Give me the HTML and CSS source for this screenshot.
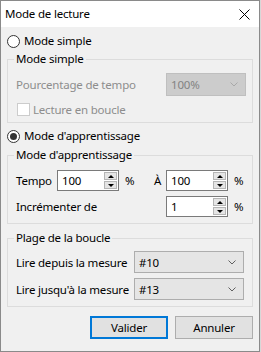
FILE: index.html
```html
<!DOCTYPE html>
<html lang="fr">
<head>
<meta charset="utf-8">
<title>Mode de lecture</title>
<link rel="stylesheet" href="styles.css">
</head>
<body>
<div class="dialog">
  <div class="titlebar">
    <span class="title">Mode de lecture</span>
    <svg class="close" width="11" height="11" viewBox="0 0 11 11"><path d="M0.5 0.5 L10.5 10.5 M10.5 0.5 L0.5 10.5" stroke="#000" stroke-width="1" fill="none"/></svg>
  </div>
  <div class="content">
    <div class="radio-row first"><span class="radio"></span><span>Mode simple</span></div>
    <fieldset class="group g1">
      <legend>Mode simple</legend>
      <div class="row-between">
        <span class="disabled-text">Pourcentage de tempo</span>
        <div class="combo combo-disabled small"><span>100%</span><svg class="chev" width="8" height="5" viewBox="0 0 8 5"><path d="M0.5 0.5 L4 4 L7.5 0.5" stroke="#a8a8a8" fill="none"/></svg></div>
      </div>
      <div class="check-row"><span class="checkbox"></span><span class="disabled-text">Lecture en boucle</span></div>
    </fieldset>
    <div class="radio-row second"><span class="radio checked"></span><span>Mode d'apprentissage</span></div>
    <fieldset class="group g2">
      <legend>Mode d'apprentissage</legend>
      <div class="learn-grid">
        <span>Tempo</span>
        <div class="spin"><span class="spin-val">100</span><div class="spin-btns"><span class="sb up"></span><span class="sb down"></span></div></div>
        <span class="pct">%</span>
        <span>À</span>
        <div class="spin"><span class="spin-val">100</span><div class="spin-btns"><span class="sb up"></span><span class="sb down"></span></div></div>
        <span class="pct">%</span>
        <span class="span4">Incrémenter de</span>
        <div class="spin"><span class="spin-val">1</span><div class="spin-btns"><span class="sb up"></span><span class="sb down"></span></div></div>
        <span class="pct">%</span>
      </div>
    </fieldset>
    <fieldset class="group g3">
      <legend>Plage de la boucle</legend>
      <div class="range-grid">
        <span>Lire depuis la mesure</span>
        <div class="combo"><span>#10</span><svg class="chev" width="8" height="5" viewBox="0 0 8 5"><path d="M0.5 0.5 L4 4 L7.5 0.5" stroke="#606060" fill="none"/></svg></div>
        <span>Lire jusqu'à la mesure</span>
        <div class="combo"><span>#13</span><svg class="chev" width="8" height="5" viewBox="0 0 8 5"><path d="M0.5 0.5 L4 4 L7.5 0.5" stroke="#606060" fill="none"/></svg></div>
      </div>
    </fieldset>
    <div class="buttons">
      <button class="btn default">Valider</button>
      <button class="btn">Annuler</button>
    </div>
  </div>
</div>
</body>
</html>
```
FILE: styles.css
```css
* { box-sizing: border-box; }
html, body { margin: 0; padding: 0; }
body {
  background: #d8d8d8;
  font-family: "Noto Sans", "Open Sans", sans-serif;
  font-size: 11.5px;
  letter-spacing: -0.2px;
  color: #000;
  width: 261px;
  height: 352px;
  overflow: hidden;
  white-space: nowrap;
}
.dialog {
  width: 260px;
  height: 352px;
  border: 1px solid #8a8a8a;
  background: #f0f0f0;
  display: flex;
  flex-direction: column;
}
.titlebar {
  height: 26px;
  background: #fff;
  display: flex;
  align-items: center;
  justify-content: space-between;
  padding: 0 9px 0 4px;
  flex: none;
}
.title { line-height: 16px; }
.close { display: block; }
.content {
  padding: 0 6px 0 6px;
  display: flex;
  flex-direction: column;
}
.radio-row {
  display: flex;
  align-items: center;
  gap: 4px;
  height: 16px;
  line-height: 16px;
}
.radio-row.first { margin-top: 6px; }
.radio-row.second { margin-top: 5px; }
.radio {
  width: 13px;
  height: 13px;
  border: 1px solid #333;
  border-radius: 50%;
  background: #fff;
  display: flex;
  align-items: center;
  justify-content: center;
  flex: none;
}
.radio.checked::after {
  content: "";
  width: 7px;
  height: 7px;
  border-radius: 50%;
  background: #333;
}
.group {
  border: 1px solid #dcdcdc;
  margin: 2px 0 0 0;
  padding: 0 6px 5px 8px;
  min-width: 0;
}
.group legend {
  padding: 0 2px;
  margin-left: -2px;
  line-height: 16px;
}
.g2 { margin-top: 3px; padding-bottom: 6px; }
.g3 { margin-top: 6px; padding-bottom: 6px; }
.row-between {
  display: flex;
  align-items: center;
  justify-content: space-between;
  margin-top: 6px;
}
.disabled-text { color: #8d8d8d; }
.combo {
  width: 110px;
  height: 22px;
  background: #e5e5e5;
  border: 1px solid #adadad;
  display: flex;
  align-items: center;
  justify-content: space-between;
  padding: 0 7px 0 4px;
}
.combo.small { width: 80px; height: 23px; }
.combo-disabled { background: #cccccc; border-color: #bfbfbf; color: #838383; }
.chev { display: block; }
.check-row {
  display: flex;
  align-items: center;
  gap: 3px;
  height: 16px;
  margin-top: 5px;
  padding-left: 1px;
}
.checkbox {
  width: 13px;
  height: 13px;
  border: 1px solid #cccccc;
  background: #fff;
  flex: none;
}
.learn-grid {
  display: grid;
  grid-template-columns: 41px 62px 35px 12px 62px auto;
  grid-auto-rows: 21px;
  row-gap: 5px;
  align-items: center;
  margin-top: 7px;
}
.span4 { grid-column: 1 / span 4; }
.pct { padding-left: 6px; }
.spin {
  height: 21px;
  border: 1px solid #7a7a7a;
  background: #fff;
  display: flex;
  align-items: stretch;
}
.spin-val { flex: 1; padding-left: 4px; line-height: 19px; }
.spin-btns {
  width: 14px;
  display: flex;
  flex-direction: column;
  padding: 1px 1px 1px 0;
  gap: 1px;
}
.sb {
  flex: 1;
  background: #e5e5e5;
  border: 1px solid #b5b5b5;
  display: flex;
  align-items: center;
  justify-content: center;
}
.sb::after {
  content: "";
  width: 0;
  height: 0;
  border-left: 3px solid transparent;
  border-right: 3px solid transparent;
}
.sb.up::after { border-bottom: 3px solid #000; }
.sb.down::after { border-top: 3px solid #000; }
.range-grid {
  display: grid;
  grid-template-columns: 118px 110px;
  grid-auto-rows: 22px;
  row-gap: 5px;
  align-items: center;
  margin-top: 5px;
}
.buttons {
  display: flex;
  justify-content: flex-end;
  gap: 7px;
  margin-top: 9px;
}
.btn {
  width: 78px;
  height: 23px;
  font-family: inherit;
  font-size: 11.5px;
  letter-spacing: -0.2px;
  background: #e1e1e1;
  border: 1px solid #adadad;
  padding: 0;
  color: #000;
}
.btn.default { border: 2px solid #0078d7; }
```
